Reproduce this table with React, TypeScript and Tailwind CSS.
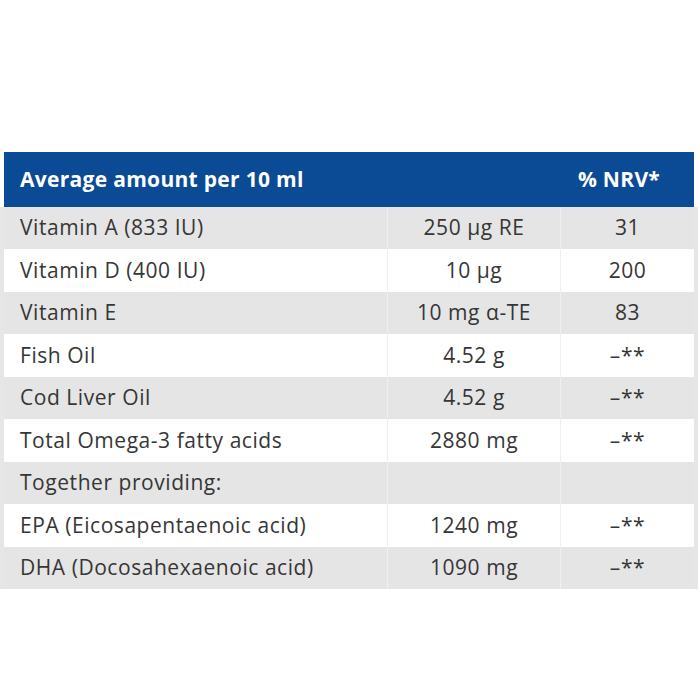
const rows = [
  { name: "Vitamin A (833 IU)", amount: "250 µg RE", nrv: "31" },
  { name: "Vitamin D (400 IU)", amount: "10 µg", nrv: "200" },
  { name: "Vitamin E", amount: "10 mg α-TE", nrv: "83" },
  { name: "Fish Oil", amount: "4.52 g", nrv: "–**" },
  { name: "Cod Liver Oil", amount: "4.52 g", nrv: "–**" },
  { name: "Total Omega-3 fatty acids", amount: "2880 mg", nrv: "–**" },
  { name: "Together providing:", amount: "", nrv: "" },
  { name: "EPA (Eicosapentaenoic acid)", amount: "1240 mg", nrv: "–**" },
  { name: "DHA (Docosahexaenoic acid)", amount: "1090 mg", nrv: "–**" },
];

const App = () => (
  <div className="w-[700px] h-[700px] bg-white pt-[152px] font-['Open_Sans',sans-serif]">
    <div className="ml-[4px] w-[690px] h-[55px] bg-[#0b4a94] grid grid-cols-[383px_173px_134px] items-center text-white font-bold text-[21px] tracking-[0.3px]">
      <div className="pl-4">Average amount per 10 ml</div>
      <div />
      <div className="text-center pr-4">% NRV*</div>
    </div>
    <div className="w-[698px] border-x-4 border-[#e6e6e6]">
      {rows.map((r, i) => (
        <div
          key={r.name}
          className={`grid grid-cols-[383px_173px_134px] text-[21px] tracking-[0.55px] text-[#363636] ${i % 2 === 0 ? "bg-[#e5e5e5] h-[42px]" : "bg-white h-[43px]"}`}
        >
          <div className="pl-4 flex items-center">{r.name}</div>
          <div className="flex items-center justify-center border-l border-[#efefef]">{r.amount}</div>
          <div className="flex items-center justify-center border-l border-[#efefef]">{r.nrv}</div>
        </div>
      ))}
    </div>
  </div>
);

export default App;
